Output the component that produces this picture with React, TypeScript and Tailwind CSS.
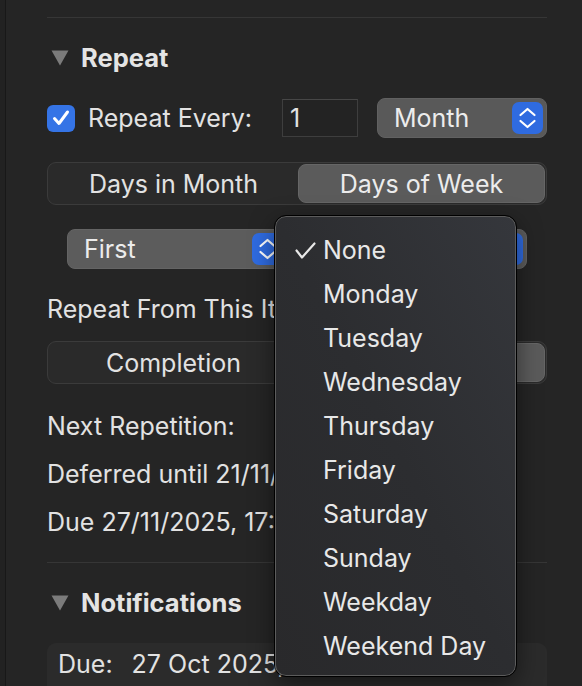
import React from "react";

function Stepper({ className = "" }: { className?: string }) {
  return (
    <div className={`w-[31px] h-[32px] rounded-[7px] bg-[#2f6be0] flex items-center justify-center shrink-0 ${className}`}>
      <svg width="31" height="32" viewBox="0 0 31 32" fill="none" stroke="white" strokeWidth="2.2" strokeLinecap="round" strokeLinejoin="round">
        <path d="M8.5 13 L15.5 7 L22.5 13" />
        <path d="M8.5 19 L15.5 25 L22.5 19" />
      </svg>
    </div>
  );
}

function Triangle() {
  return (
    <svg width="18" height="16" viewBox="0 0 18 16" className="shrink-0">
      <path d="M0.5 0.5 L17.5 0.5 L9 15.5 Z" fill="#7b7b7b" />
    </svg>
  );
}

const items = ["None", "Monday", "Tuesday", "Wednesday", "Thursday", "Friday", "Saturday", "Sunday", "Weekday", "Weekend Day"];

export default function App() {
  return (
    <div className="relative w-[582px] h-[686px] overflow-hidden flex items-start bg-[#252525] text-[#e2e2e2] font-['Inter','Noto_Sans',sans-serif] text-[25px]">
      <div className="w-[6px] self-stretch bg-[#222222] border-r border-[#181818] shrink-0" />
      <div className="flex-1 flex flex-col pl-[41px] pr-[35px] [&>*]:shrink-0">
        <div className="mt-[17px] h-px bg-[#363636]" />

        {/* Repeat header */}
        <div className="mt-[27px] h-[26px] flex items-center">
          <div className="ml-[4px]"><Triangle /></div>
          <div className="ml-[12px] font-bold text-[25.5px] leading-[26px] text-[#e4e4e4]">Repeat</div>
        </div>

        {/* Repeat every row */}
        <div className="mt-[27px] h-[40px] flex items-center whitespace-nowrap">
          <div className="w-[28px] h-[27px] rounded-[6px] bg-[#3574e6] flex items-center justify-center shrink-0">
            <svg width="20" height="18" viewBox="0 0 20 18" fill="none" stroke="white" strokeWidth="3" strokeLinecap="round" strokeLinejoin="round">
              <path d="M3.5 9.5 L8 14.5 L16.5 3" />
            </svg>
          </div>
          <div className="ml-[13px] leading-[30px] w-[181px] shrink-0">Repeat Every:</div>
          <div className="ml-[13px] w-[76px] h-[38px] shrink-0 bg-[#232323] border border-[#3e3e3e] border-t-[#474747] flex items-center pl-[7px] leading-[30px]">1</div>
          <div className="ml-[19px] w-[170px] h-[40px] shrink-0 rounded-[8px] bg-[#595959] border border-[#616161] flex items-center justify-between pl-[16px] pr-[3px]">
            <span className="leading-[30px] text-[#ececec]">Month</span>
            <Stepper />
          </div>
        </div>

        {/* Segmented 1 */}
        <div className="mt-[24px] h-[43px] rounded-[9px] bg-[#2a2a2a] border border-[#3b3b3b] flex p-px whitespace-nowrap">
          <div className="w-[249px] flex items-center justify-center leading-[30px]">Days in Month</div>
          <div className="flex-1 rounded-[8px] bg-[#5b5b5b] border border-[#666] flex items-center justify-center leading-[30px] text-[#ececec]">Days of Week</div>
        </div>

        {/* Popups row */}
        <div className="mt-[24px] h-[40px] flex pl-[20px] whitespace-nowrap">
          <div className="w-[220px] h-[40px] rounded-[8px] bg-[#5c5c5c] border border-[#646464] flex items-center justify-between pl-[16px] pr-[3px]">
            <span className="leading-[30px] text-[#ececec]">First</span>
            <Stepper />
          </div>
          <div className="ml-[8px] w-[232px] h-[40px] rounded-[8px] bg-[#5c5c5c] border border-[#646464] flex items-center justify-between pl-[16px] pr-[3px]">
            <span className="leading-[30px] text-[#ececec]">None</span>
            <Stepper />
          </div>
        </div>

        <div className="mt-[25px] h-[30px] leading-[30px] whitespace-nowrap">Repeat From This Item's:</div>

        {/* Segmented 2 */}
        <div className="mt-[17px] h-[43px] rounded-[9px] bg-[#2a2a2a] border border-[#3b3b3b] flex p-px whitespace-nowrap">
          <div className="w-[249px] flex items-center justify-center leading-[30px]">Completion</div>
          <div className="flex-1 rounded-[8px] bg-[#5b5b5b] border border-[#666] flex items-center justify-center leading-[30px] text-[#ececec]">Assigned Dates</div>
        </div>

        <div className="mt-[27px] h-[30px] leading-[30px] whitespace-nowrap">Next Repetition:</div>
        <div className="mt-[18px] h-[30px] leading-[30px] whitespace-nowrap">Deferred until 21/11/2025, 00:00</div>
        <div className="mt-[18px] h-[30px] leading-[30px] whitespace-nowrap">Due 27/11/2025, 17:00</div>

        <div className="mt-[25px] h-px bg-[#363636]" />

        {/* Notifications header */}
        <div className="mt-[27px] h-[26px] flex items-center">
          <div className="ml-[4px]"><Triangle /></div>
          <div className="ml-[12px] font-bold text-[25.5px] leading-[26px] text-[#e4e4e4]">Notifications</div>
        </div>

        <div className="mt-[27px] h-[60px] rounded-[9px] bg-[#2b2b2b] flex items-start pt-[6px] pl-[11px] whitespace-nowrap">
          <span className="leading-[30px]">Due:</span>
          <span className="ml-[19px] leading-[30px]">27 Oct 2025, 17:00</span>
        </div>
      </div>

      {/* Dropdown menu */}
      <div className="absolute left-[275px] top-[216px] w-[241px] h-[460px] rounded-[11px] border border-[#5c5c5c] outline outline-1 outline-black bg-linear-to-bl from-[#35373c] via-[#2c2d30] to-[#29292b] shadow-[0_8px_24px_rgba(0,0,0,0.5)] pt-[11px]">
        {items.map((it, i) => (
          <div key={it} className="h-[44px] flex items-center text-[#e8e8e8]">
            <div className="w-[47px] flex justify-end pr-[7px]">
              {i === 0 && (
                <svg width="21" height="17" viewBox="0 0 21 17" fill="none" stroke="#e8e8e8" strokeWidth="2.2" strokeLinecap="round" strokeLinejoin="round">
                  <path d="M1.5 8.5 L7 15.5 L19.5 1.5" />
                </svg>
              )}
            </div>
            <span className="leading-[30px] whitespace-nowrap">{it}</span>
          </div>
        ))}
      </div>
    </div>
  );
}
